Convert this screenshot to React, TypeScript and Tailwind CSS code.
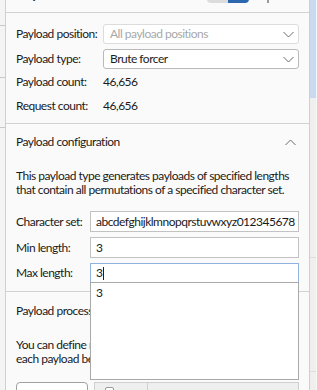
function Chevron({ up = false }: { up?: boolean }) {
  return (
    <svg width="11" height="7" viewBox="0 0 11 7" className="shrink-0">
      <path
        d={up ? "M0.5 6 L5.5 1 L10.5 6" : "M0.5 1 L5.5 6 L10.5 1"}
        fill="none"
        stroke="#6b6b6b"
        strokeWidth="1"
      />
    </svg>
  );
}

function SelectBox({ value, disabled = false }: { value: string; disabled?: boolean }) {
  return (
    <div
      className={`flex h-[20px] flex-1 items-center justify-between rounded-[3px] border bg-white pl-[6px] pr-[4px] ${
        disabled ? "border-[#dcdcdc] text-[#a8a8a8]" : "border-[#b9b9b9] text-[#1e1e1e]"
      }`}
    >
      <span>{value}</span>
      <Chevron />
    </div>
  );
}

function FieldRow({
  label,
  labelWidth,
  className = "",
  children,
}: {
  label: string;
  labelWidth: string;
  className?: string;
  children: React.ReactNode;
}) {
  return (
    <div className={`flex items-center ${className}`}>
      <div className={`${labelWidth} shrink-0`}>{label}</div>
      {children}
    </div>
  );
}

export default function App() {
  return (
    <div
      className="flex h-[390px] w-[317px] overflow-hidden whitespace-nowrap bg-[#f6f6f6] text-[12px] leading-[18px] tracking-[-0.5px] text-[#1a1a1a]"
      style={{ fontFamily: "Lato, 'Noto Sans', sans-serif" }}
    >
      {/* left strip */}
      <div className="flex w-[6px] shrink-0 flex-col border-r border-[#cfcfcf] bg-[#f4f4f4]">
        <div className="mt-[25px] h-px w-[5px] bg-[#c8c8c8]" />
        <div className="mt-[51px] h-px w-[5px] bg-[#c8c8c8]" />
        <div className="mt-[49px] h-px w-[5px] bg-[#c8c8c8]" />
      </div>

      {/* main panel */}
      <div className="relative flex w-[304px] shrink-0 flex-col border-r border-[#cfcfcf] bg-[#fafafa]">
        {/* cut-off heading */}
        <div className="h-[13px] shrink-0 overflow-hidden border-b border-[#d2d2d2]">
          <div className="-mt-[17px] flex items-end px-[10px]">
            <span className="text-[15px] font-semibold leading-[18px]">Payloads</span>
            <div className="mb-[-2px] ml-auto mr-[30px] flex h-[18px] items-end">
              <div className="h-[20px] w-[21px] rounded-l-[4px] bg-[#dcdcdc]" />
              <div className="h-[20px] w-[21px] rounded-r-[4px] bg-[#2c68b0]" />
              <div className="ml-[18px] h-[16px] w-[2px] bg-[#9a9a9a]" />
            </div>
          </div>
        </div>

        {/* payload sets */}
        <div className="flex flex-col border-b border-[#d2d2d2] px-[10px] pb-[7px] pt-[11px]">
          <FieldRow label="Payload position:" labelWidth="w-[87px]">
            <SelectBox value="All payload positions" disabled />
          </FieldRow>
          <FieldRow label="Payload type:" labelWidth="w-[87px]" className="mt-[5px]">
            <SelectBox value="Brute forcer" />
          </FieldRow>
          <FieldRow label="Payload count:" labelWidth="w-[87px]" className="mt-[3px] h-[20px]">
            <span>46,656</span>
          </FieldRow>
          <FieldRow label="Request count:" labelWidth="w-[87px]" className="mt-[4px] h-[20px]">
            <span>46,656</span>
          </FieldRow>
        </div>

        {/* payload configuration */}
        <div className="relative flex flex-col border-b border-[#d2d2d2] px-[10px] pb-[8px] pt-[9px]">
          <div className="flex items-center justify-between pr-[3px]">
            <span>Payload configuration</span>
            <Chevron up />
          </div>
          <p className="mt-[18px] leading-[14px]">
            This payload type generates payloads of specified lengths
            <br />
            that contain all permutations of a specified character set.
          </p>
          <FieldRow label="Character set:" labelWidth="w-[74px]" className="mt-[14px]">
            <div className="flex h-[21px] flex-1 items-center overflow-hidden border border-[#c2c2c2] bg-white px-[5px]">
              abcdefghijklmnopqrstuvwxyz012345678
            </div>
          </FieldRow>
          <FieldRow label="Min length:" labelWidth="w-[74px]" className="mt-[5px]">
            <div className="flex h-[21px] flex-1 items-center border border-[#c2c2c2] bg-white px-[5px]">
              3
            </div>
          </FieldRow>
          <FieldRow label="Max length:" labelWidth="w-[74px]" className="mt-[5px]">
            <div className="relative flex-1">
              <div className="flex h-[20px] items-center border border-[#8fb2de] bg-white px-[5px]">
                3<span className="ml-px h-[13px] w-px bg-[#1e1e1e]" />
              </div>
              {/* autocomplete dropdown */}
              <div className="absolute left-0 right-0 top-[19px] z-10 h-[98px] border border-[#a9a9a9] bg-white px-[5px] pt-[1px]">
                3
              </div>
            </div>
          </FieldRow>
        </div>

        {/* payload processing */}
        <div className="flex flex-col px-[10px] pt-[10px]">
          <span>Payload processing</span>
          <p className="mt-[18px] leading-[13.5px]">
            You can define rules to perform various processing tasks on
            <br />
            each payload before it is used.
          </p>
          <div className="mt-[17px] flex gap-[6px]">
            <div className="flex h-[24px] w-[72px] justify-center rounded-[4px] border border-[#a0a0a0] bg-white pt-[3px]">
              Add
            </div>
            <div className="flex h-[24px] flex-1 border border-[#cfcfcf] bg-[#efefef]">
              <div className="flex w-[53px] border-r border-[#cfcfcf] pl-[10px] pt-[4px]">
                <div className="h-[10px] w-[9px] rounded-[2px] border border-[#9a9a9a] bg-white" />
              </div>
            </div>
          </div>
        </div>
      </div>

      {/* scrollbar */}
      <div className="flex w-[6px] shrink-0 flex-col bg-[#f1eeee]">
        <div className="h-[98px] bg-[#c9d9ef]" />
        <div className="mt-[159px] h-px bg-[#dddddd]" />
        <div className="mt-[113px] h-px bg-[#dddddd]" />
      </div>
    </div>
  );
}
